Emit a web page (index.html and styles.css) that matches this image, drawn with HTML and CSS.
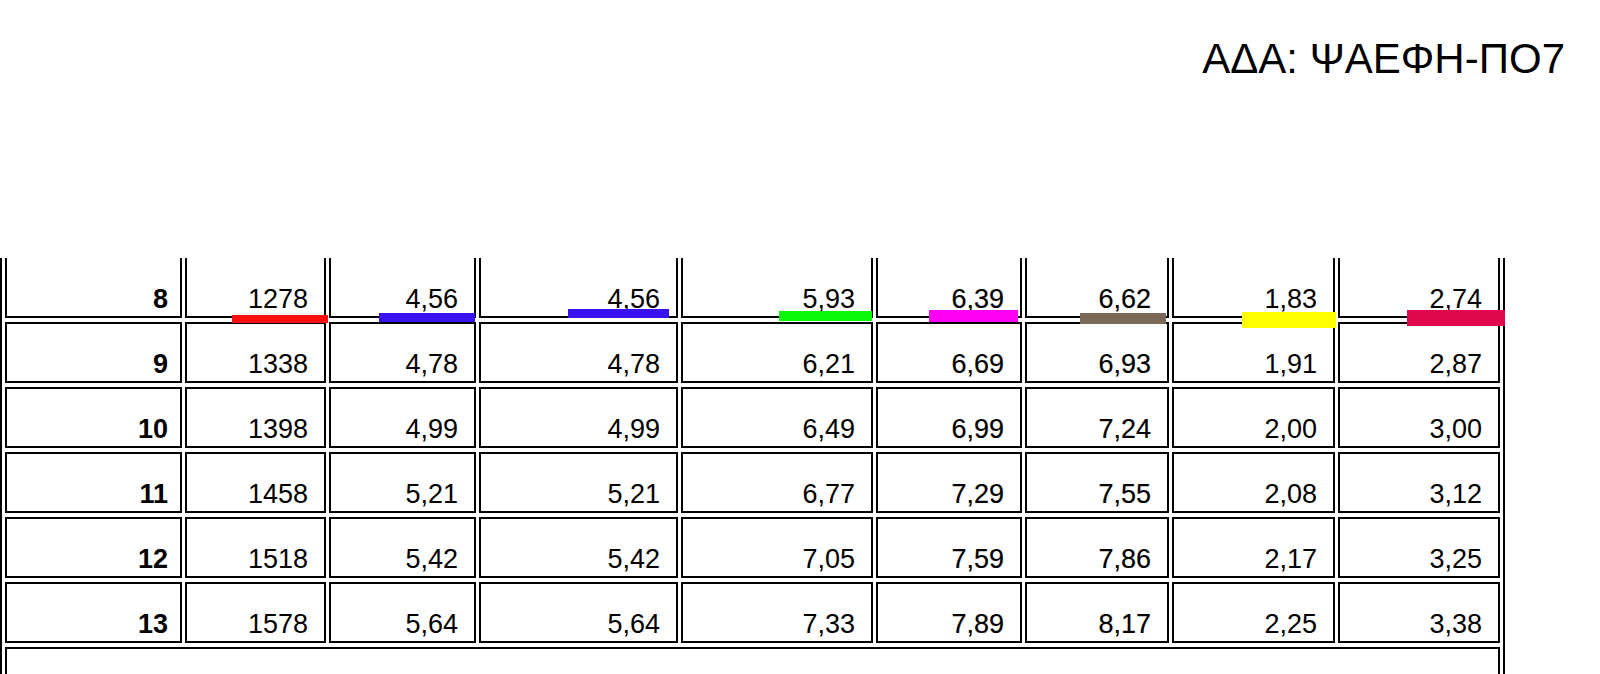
FILE: index.html
```html
<!DOCTYPE html>
<html lang="el">
<head>
    <meta charset="UTF-8">
    <meta name="viewport" content="width=device-width, initial-scale=1.0">
    <title>ΑΔΑ: ΨΑΕΦΗ-ΠΟ7</title>
    <link rel="stylesheet" href="styles.css">
</head>
<body>
    <!-- κωδικός ανάρτησης -->
    <div class="ada">ΑΔΑ: ΨΑΕΦΗ-ΠΟ7</div>

    <!-- συνέχεια πίνακα από την προηγούμενη σελίδα -->
    <div class="sheet">
        <table class="rates">
            <colgroup>
                <col class="c1"><col class="c2"><col class="c3"><col class="c4"><col class="c5">
                <col class="c6"><col class="c7"><col class="c8"><col class="c9">
            </colgroup>
            <tr class="cut">
                <td class="num">8</td><td>1278</td><td>4,56</td><td>4,56</td><td>5,93</td>
                <td class="heavy">6,39</td><td class="heavy">6,62</td><td>1,83</td><td>2,74</td>
            </tr>
            <tr>
                <td class="num">9</td><td>1338</td><td>4,78</td><td>4,78</td><td>6,21</td>
                <td class="heavy">6,69</td><td class="heavy">6,93</td><td>1,91</td><td>2,87</td>
            </tr>
            <tr>
                <td class="num">10</td><td>1398</td><td>4,99</td><td>4,99</td><td>6,49</td>
                <td class="heavy">6,99</td><td class="heavy">7,24</td><td>2,00</td><td>3,00</td>
            </tr>
            <tr>
                <td class="num">11</td><td>1458</td><td>5,21</td><td>5,21</td><td>6,77</td>
                <td class="heavy">7,29</td><td class="heavy">7,55</td><td>2,08</td><td>3,12</td>
            </tr>
            <tr>
                <td class="num">12</td><td>1518</td><td>5,42</td><td>5,42</td><td>7,05</td>
                <td class="heavy">7,59</td><td class="heavy">7,86</td><td>2,17</td><td>3,25</td>
            </tr>
            <tr>
                <td class="num">13</td><td>1578</td><td>5,64</td><td>5,64</td><td>7,33</td>
                <td class="heavy">7,89</td><td class="heavy">8,17</td><td>2,25</td><td>3,38</td>
            </tr>
            <tr class="tail">
                <td colspan="9"></td>
            </tr>
        </table>

        <!-- σημάνσεις με μαρκαδόρο -->
        <span class="mark mark-red"></span>
        <span class="mark mark-blue-a"></span>
        <span class="mark mark-blue-b"></span>
        <span class="mark mark-green"></span>
        <span class="mark mark-magenta"></span>
        <span class="mark mark-brown"></span>
        <span class="mark mark-yellow"></span>
        <span class="mark mark-crimson"></span>
    </div>
</body>
</html>
```

FILE: styles.css
```css
/* σελίδα */
html, body {
    margin: 0;
    padding: 0;
    background: #ffffff;
    overflow: hidden;
}

body {
    font-family: 'Liberation Sans', Arial, sans-serif;
    color: #000;
}

.ada {
    text-align: right;
    font-size: 42px;
    line-height: 48px;
    padding-top: 35px;
    padding-right: 35px;
}

/* πίνακας */
.sheet {
    position: relative;
    margin-top: 175px;
    height: 416px;
    overflow: hidden;
}

.rates {
    margin-top: -4px;
    width: 1505px;
    table-layout: fixed;
    border-collapse: separate;
    border-spacing: 3px 4px;
    border: 2px solid #000;
    border-top: none;
}

.c1 { width: 177px; }
.c2 { width: 141px; }
.c3 { width: 147px; }
.c4 { width: 199px; }
.c5 { width: 192px; }
.c6 { width: 146px; }
.c7 { width: 144px; }
.c8 { width: 163px; }
.c9 { width: 162px; }

.rates tr {
    height: 61px;
}

.rates td {
    border: 2px solid #000;
    padding: 0 16px 1px 0;
    text-align: right;
    vertical-align: bottom;
    font-size: 27px;
    white-space: nowrap;
}

.rates tr.cut {
    height: 60px;
}

.rates tr.cut td {
    border-top: none;
}

.rates tr.tail {
    height: 120px;
}

.rates td.num {
    font-weight: bold;
    padding-right: 12px;
}

.rates td.heavy {
    -webkit-text-stroke: 0.2px #000;
}

/* σημάνσεις */
.mark {
    position: absolute;
    display: block;
}

.mark-red     { left: 232px;  top: 57px; width: 96px;  height: 8px;  background: #fa0f0f; }
.mark-blue-a  { left: 379px;  top: 55px; width: 96px;  height: 9px;  background: #3a12f2; }
.mark-blue-b  { left: 568px;  top: 51px; width: 101px; height: 9px;  background: #3a12f2; }
.mark-green   { left: 779px;  top: 53px; width: 93px;  height: 10px; background: #0bf80b; }
.mark-magenta { left: 929px;  top: 52px; width: 89px;  height: 12px; background: #ff00f5; }
.mark-brown   { left: 1080px; top: 55px; width: 86px;  height: 11px; background: #7a6858; }
.mark-yellow  { left: 1242px; top: 54px; width: 94px;  height: 16px; background: #ffff00; }
.mark-crimson { left: 1407px; top: 52px; width: 98px;  height: 16px; background: #e0084c; }
```
